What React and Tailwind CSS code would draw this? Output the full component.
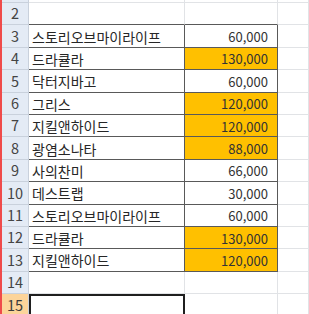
const FILAS = [
  { n: 3, titulo: '스토리오브마이라이프', precio: '60,000' },
  { n: 4, titulo: '드라큘라', precio: '130,000', marcado: true },
  { n: 5, titulo: '닥터지바고', precio: '60,000' },
  { n: 6, titulo: '그리스', precio: '120,000', marcado: true },
  { n: 7, titulo: '지킬앤하이드', precio: '120,000', marcado: true },
  { n: 8, titulo: '광염소나타', precio: '88,000', marcado: true },
  { n: 9, titulo: '사의찬미', precio: '66,000' },
  { n: 10, titulo: '데스트랩', precio: '30,000' },
  { n: 11, titulo: '스토리오브마이라이프', precio: '60,000' },
  { n: 12, titulo: '드라큘라', precio: '130,000', marcado: true },
  { n: 13, titulo: '지킬앤하이드', precio: '120,000', marcado: true },
];

const FUENTE = { fontFamily: '"Noto Sans CJK KR", "Noto Sans", sans-serif' };

export default function App() {
  return (
    <div
      className="h-[314px] w-[309px] overflow-hidden bg-white border-l-2 border-[#ef4b4b] text-[#262626]"
      style={FUENTE}
    >
      <Fila altura="h-[3px]" numero="" />
      <Fila numero={2} bordeInferiorOscuro />
      {FILAS.map((f) => (
        <Fila
          key={f.n}
          numero={f.n}
          titulo={f.titulo}
          precio={f.precio}
          marcado={f.marcado}
          enTabla
          bordeInferiorOscuro
        />
      ))}
      <Fila numero={14} />
      <Fila numero={15} seleccionada />
    </div>
  );
}

function Fila({
  numero,
  titulo,
  precio,
  marcado,
  enTabla,
  bordeInferiorOscuro,
  seleccionada,
  altura = 'h-[22.4px]',
}) {
  const oscuroB = bordeInferiorOscuro ? 'border-b-[#595959]' : 'border-b-[#e1e3e6]';
  return (
    <div className={`grid grid-cols-[27px_156px_93px_1fr] ${altura}`}>
      <div
        className={`flex items-center justify-center border-r border-b border-[#c9d1dc] text-[14.5px] leading-none ${
          seleccionada ? 'bg-[#fcd49a] text-[#3b3b3b]' : 'bg-[#e4ebf5] text-[#444]'
        }`}
      >
        {numero}
      </div>
      <div
        className={`flex items-center pl-[3px] pt-[1px] text-[14px] leading-none whitespace-nowrap overflow-hidden ${
          seleccionada
            ? 'border-2 border-[#1f1f1f]'
            : `border-b border-r ${oscuroB} ${enTabla ? 'border-r-[#595959]' : 'border-r-[#e1e3e6]'}`
        }`}
      >
        {titulo}
      </div>
      <div
        className={`flex items-center justify-end pr-[9px] pt-[1px] text-[13px] leading-none text-[#333] border-b border-r ${oscuroB} ${
          enTabla ? 'border-r-[#595959]' : 'border-r-[#e1e3e6]'
        } ${marcado ? 'bg-[#ffc000]' : ''}`}
      >
        {precio}
      </div>
      <div className="border-b border-r border-[#e1e3e6]" />
    </div>
  );
}
